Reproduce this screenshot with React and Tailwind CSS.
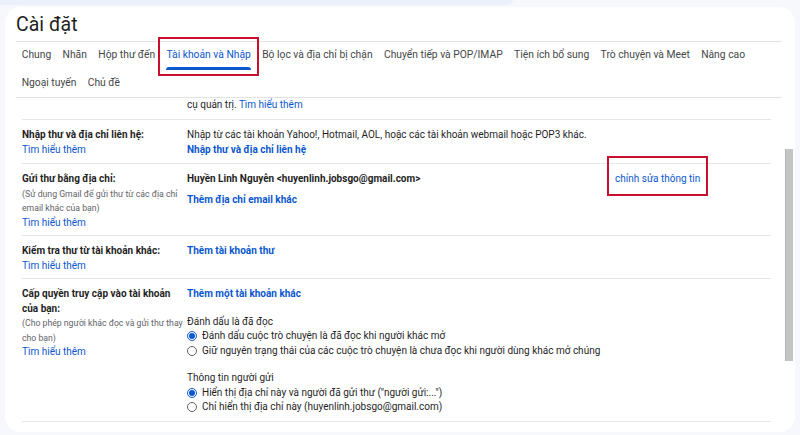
import React from 'react';

const tabsTop = [
  'Chung', 'Nhãn', 'Hộp thư đến', 'Tài khoản và Nhập', 'Bộ lọc và địa chỉ bị chặn',
  'Chuyển tiếp và POP/IMAP', 'Tiện ích bổ sung', 'Trò chuyện và Meet', 'Nâng cao',
];
const tabsBottom = ['Ngoại tuyến', 'Chủ đề'];

function Tab({ label, active }) {
  return (
    <div className="relative h-[28px] px-[5.7px] flex flex-col shrink-0 whitespace-nowrap">
      <div className={`flex-1 flex items-center ${active ? 'text-[#0b57d0]' : 'text-[#444746]'}`}>{label}</div>
      <div className={`h-[3px] rounded-t-[3px] ${active ? 'bg-[#0b57d0]' : 'bg-transparent'}`}></div>
      {active && (
        <div className="absolute left-[-3px] right-[-3px] top-[-5px] bottom-[-6px] border-2 border-[#c8102e]"></div>
      )}
    </div>
  );
}

function Radio({ checked, children }) {
  return (
    <div className="flex items-center gap-[5px] whitespace-nowrap">
      <span
        className={`w-[10px] h-[10px] rounded-full border flex items-center justify-center ${
          checked ? 'border-[#0b57d0]' : 'border-[#5f6368]'
        }`}
      >
        {checked && <span className="w-[6px] h-[6px] rounded-full bg-[#0b57d0]"></span>}
      </span>
      <span>{children}</span>
    </div>
  );
}

function Learn() {
  return <div className="text-[#0b57d0]">Tìm hiểu thêm</div>;
}

function Row({ left, children, tight }) {
  return (
    <div className={`flex pt-[8px] ${tight ? 'pb-[5px]' : 'pb-[6px]'} border-b border-[#e6e6e6]`}>
      <div className="w-[165px] shrink-0 whitespace-nowrap">{left}</div>
      <div className="flex-1 whitespace-nowrap">{children}</div>
    </div>
  );
}

export default function App() {
  return (
    <div className="w-[800px] h-[435px] bg-[#f6f8fc] font-['Roboto','Liberation_Sans',sans-serif] text-[#1f1f1f] overflow-hidden">
      <div className="h-[5px] w-[513px] bg-[#eaf1fb] rounded-br-[6px]"></div>
      <div className="mx-[5px] mt-[2px] h-[425px] bg-white rounded-[16px] flex flex-col overflow-hidden">
        {/* Header */}
        <div className="h-[34px] flex items-center pl-[11px] pt-[2px] text-[19.5px] text-[#1f1f1f]">Cài đặt</div>
        <div className="ml-[11px] mr-[13px] border-t border-[#e3e3e3]"></div>

        {/* Tabs */}
        <div className="pl-[11px] text-[10.3px]">
          <div className="flex">
            {tabsTop.map((t) => (
              <Tab key={t} label={t} active={t === 'Tài khoản và Nhập'} />
            ))}
          </div>
          <div className="flex h-[27px]">
            {tabsBottom.map((t) => (
              <Tab key={t} label={t} />
            ))}
          </div>
        </div>
        <div className="ml-[11px] mr-[13px] border-t border-[#e3e3e3]"></div>

        {/* Content + scrollbar */}
        <div className="flex-1 flex min-h-0">
          <div className="flex-1 pl-[17px] pr-[14px] text-[10px] leading-[14.5px] overflow-hidden">
            <div className="flex pb-[6.5px] border-b border-[#e6e6e6]">
              <div className="w-[165px] shrink-0"></div>
              <div>cụ quản trị. <span className="text-[#0b57d0]">Tìm hiểu thêm</span></div>
            </div>

            <Row
              left={
                <>
                  <div className="font-bold">Nhập thư và địa chỉ liên hệ:</div>
                  <Learn />
                </>
              }
            >
              <div>Nhập từ các tài khoản Yahoo!, Hotmail, AOL, hoặc các tài khoản webmail hoặc POP3 khác.</div>
              <div className="font-bold text-[#0b57d0]">Nhập thư và địa chỉ liên hệ</div>
            </Row>

            <Row
              tight
              left={
                <>
                  <div className="font-bold">Gửi thư bằng địa chỉ:</div>
                  <div className="text-[8.7px] text-[#5f6368]">(Sử dụng Gmail để gửi thư từ các địa chỉ</div>
                  <div className="text-[8.7px] text-[#5f6368]">email khác của bạn)</div>
                  <Learn />
                </>
              }
            >
              <div className="flex">
                <div className="w-[428px] shrink-0">
                  <div className="font-bold">Huyền Linh Nguyễn &lt;huyenlinh.jobsgo@gmail.com&gt;</div>
                  <div className="font-bold text-[#0b57d0] mt-[6.5px]">Thêm địa chỉ email khác</div>
                </div>
                <div className="relative h-fit text-[#0b57d0]">
                  chỉnh sửa thông tin
                  <div className="absolute left-[-8px] right-[-8px] top-[-16px] bottom-[-9px] border-2 border-[#c8102e]"></div>
                </div>
              </div>
            </Row>

            <Row
              tight
              left={
                <>
                  <div className="font-bold">Kiểm tra thư từ tài khoản khác:</div>
                  <Learn />
                </>
              }
            >
              <div className="font-bold text-[#0b57d0]">Thêm tài khoản thư</div>
            </Row>

            <Row
              left={
                <>
                  <div className="font-bold">Cấp quyền truy cập vào tài khoản</div>
                  <div className="font-bold">của bạn:</div>
                  <div className="text-[8.7px] text-[#5f6368]">(Cho phép người khác đọc và gửi thư thay</div>
                  <div className="text-[8.7px] text-[#5f6368]">cho bạn)</div>
                  <Learn />
                </>
              }
            >
              <div className="font-bold text-[#0b57d0]">Thêm một tài khoản khác</div>
              <div className="mt-[13px]">Đánh dấu là đã đọc</div>
              <Radio checked>Đánh dấu cuộc trò chuyện là đã đọc khi người khác mở</Radio>
              <Radio>Giữ nguyên trạng thái của các cuộc trò chuyện là chưa đọc khi người dùng khác mở chúng</Radio>
              <div className="mt-[13px]">Thông tin người gửi</div>
              <Radio checked>Hiển thị địa chỉ này và người đã gửi thư ("người gửi:...")</Radio>
              <Radio>Chỉ hiển thị địa chỉ này (huyenlinh.jobsgo@gmail.com)</Radio>
            </Row>
          </div>

          {/* Scrollbar */}
          <div className="w-[8px] mr-[2px] pt-[51px]">
            <div className="h-[212px] bg-[#c4c4c4] border-l border-[#b5b5b5]"></div>
          </div>
        </div>
      </div>
    </div>
  );
}
